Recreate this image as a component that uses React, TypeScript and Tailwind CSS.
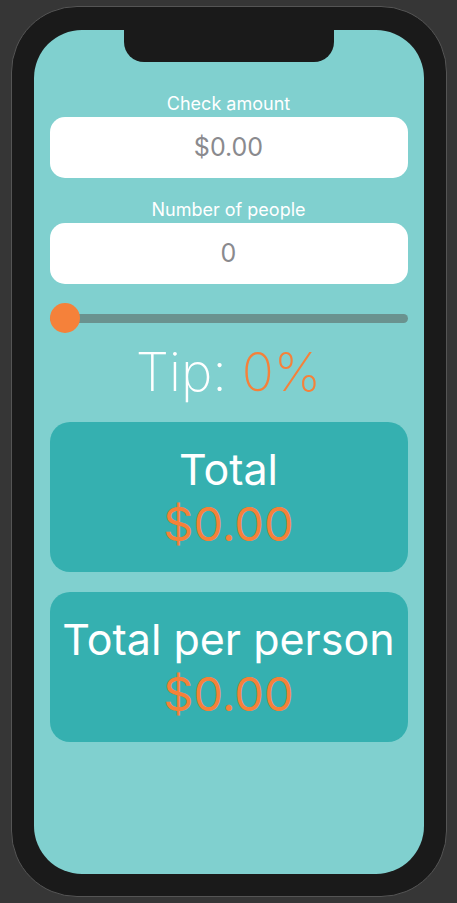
import { useState } from "react";

function Field({ label, value }: { label: string; value: string }) {
  return (
    <div className="flex flex-col items-center">
      <span className="text-[18px] leading-[20px] text-white">{label}</span>
      <div className="mt-[3px] flex h-[61px] w-full items-center justify-center rounded-[15px] bg-white">
        <span className="text-[25px] text-[#8a8a8e]">{value}</span>
      </div>
    </div>
  );
}

function ResultCard({ title, amount }: { title: string; amount: string }) {
  return (
    <div className="flex h-[150px] flex-col items-center justify-center rounded-[20px] bg-[#35b0b0]">
      <span className="text-[43px] leading-[54px] text-white">{title}</span>
      <span className="text-[47px] leading-[56px] text-[#f5813a]">{amount}</span>
    </div>
  );
}

export default function App() {
  const [tip] = useState(0);

  return (
    <div
      className="flex h-[903px] w-full justify-center bg-[#363636] pt-[6px]"
      style={{ fontFamily: "Inter, 'Noto Sans', sans-serif" }}
    >
      <div className="relative h-[891px] w-[436px] rounded-[66px] border border-[#555555] bg-[#1a1a1a] p-[22px] pt-[23px]">
        <div className="relative h-[844px] w-[390px] overflow-hidden rounded-[48px] bg-[#80d0cf]">
          <div className="absolute left-[90px] top-0 h-[32px] w-[210px] rounded-b-[20px] bg-[#1a1a1a]" />
          <div className="flex flex-col px-4 pt-[64px]">
            <Field label="Check amount" value="$0.00" />
            <div className="mt-[22px]">
              <Field label="Number of people" value="0" />
            </div>
            <div className="relative mt-[19px] flex h-[30px] items-center">
              <div className="h-[9px] w-full rounded-full bg-[#6a928f]" />
              <div className="absolute left-0 top-0 h-[30px] w-[30px] rounded-full bg-[#f5813a]" />
            </div>
            <div className="mt-[4px] flex h-[70px] items-center justify-center text-[53px] font-extralight leading-none">
              <span className="text-white">Tip:&nbsp;</span>
              <span className="text-[#f5813a]">{tip}%</span>
            </div>
            <div className="mt-[15px] flex flex-col gap-5">
              <ResultCard title="Total" amount="$0.00" />
              <ResultCard title="Total per person" amount="$0.00" />
            </div>
          </div>
        </div>
      </div>
    </div>
  );
}
